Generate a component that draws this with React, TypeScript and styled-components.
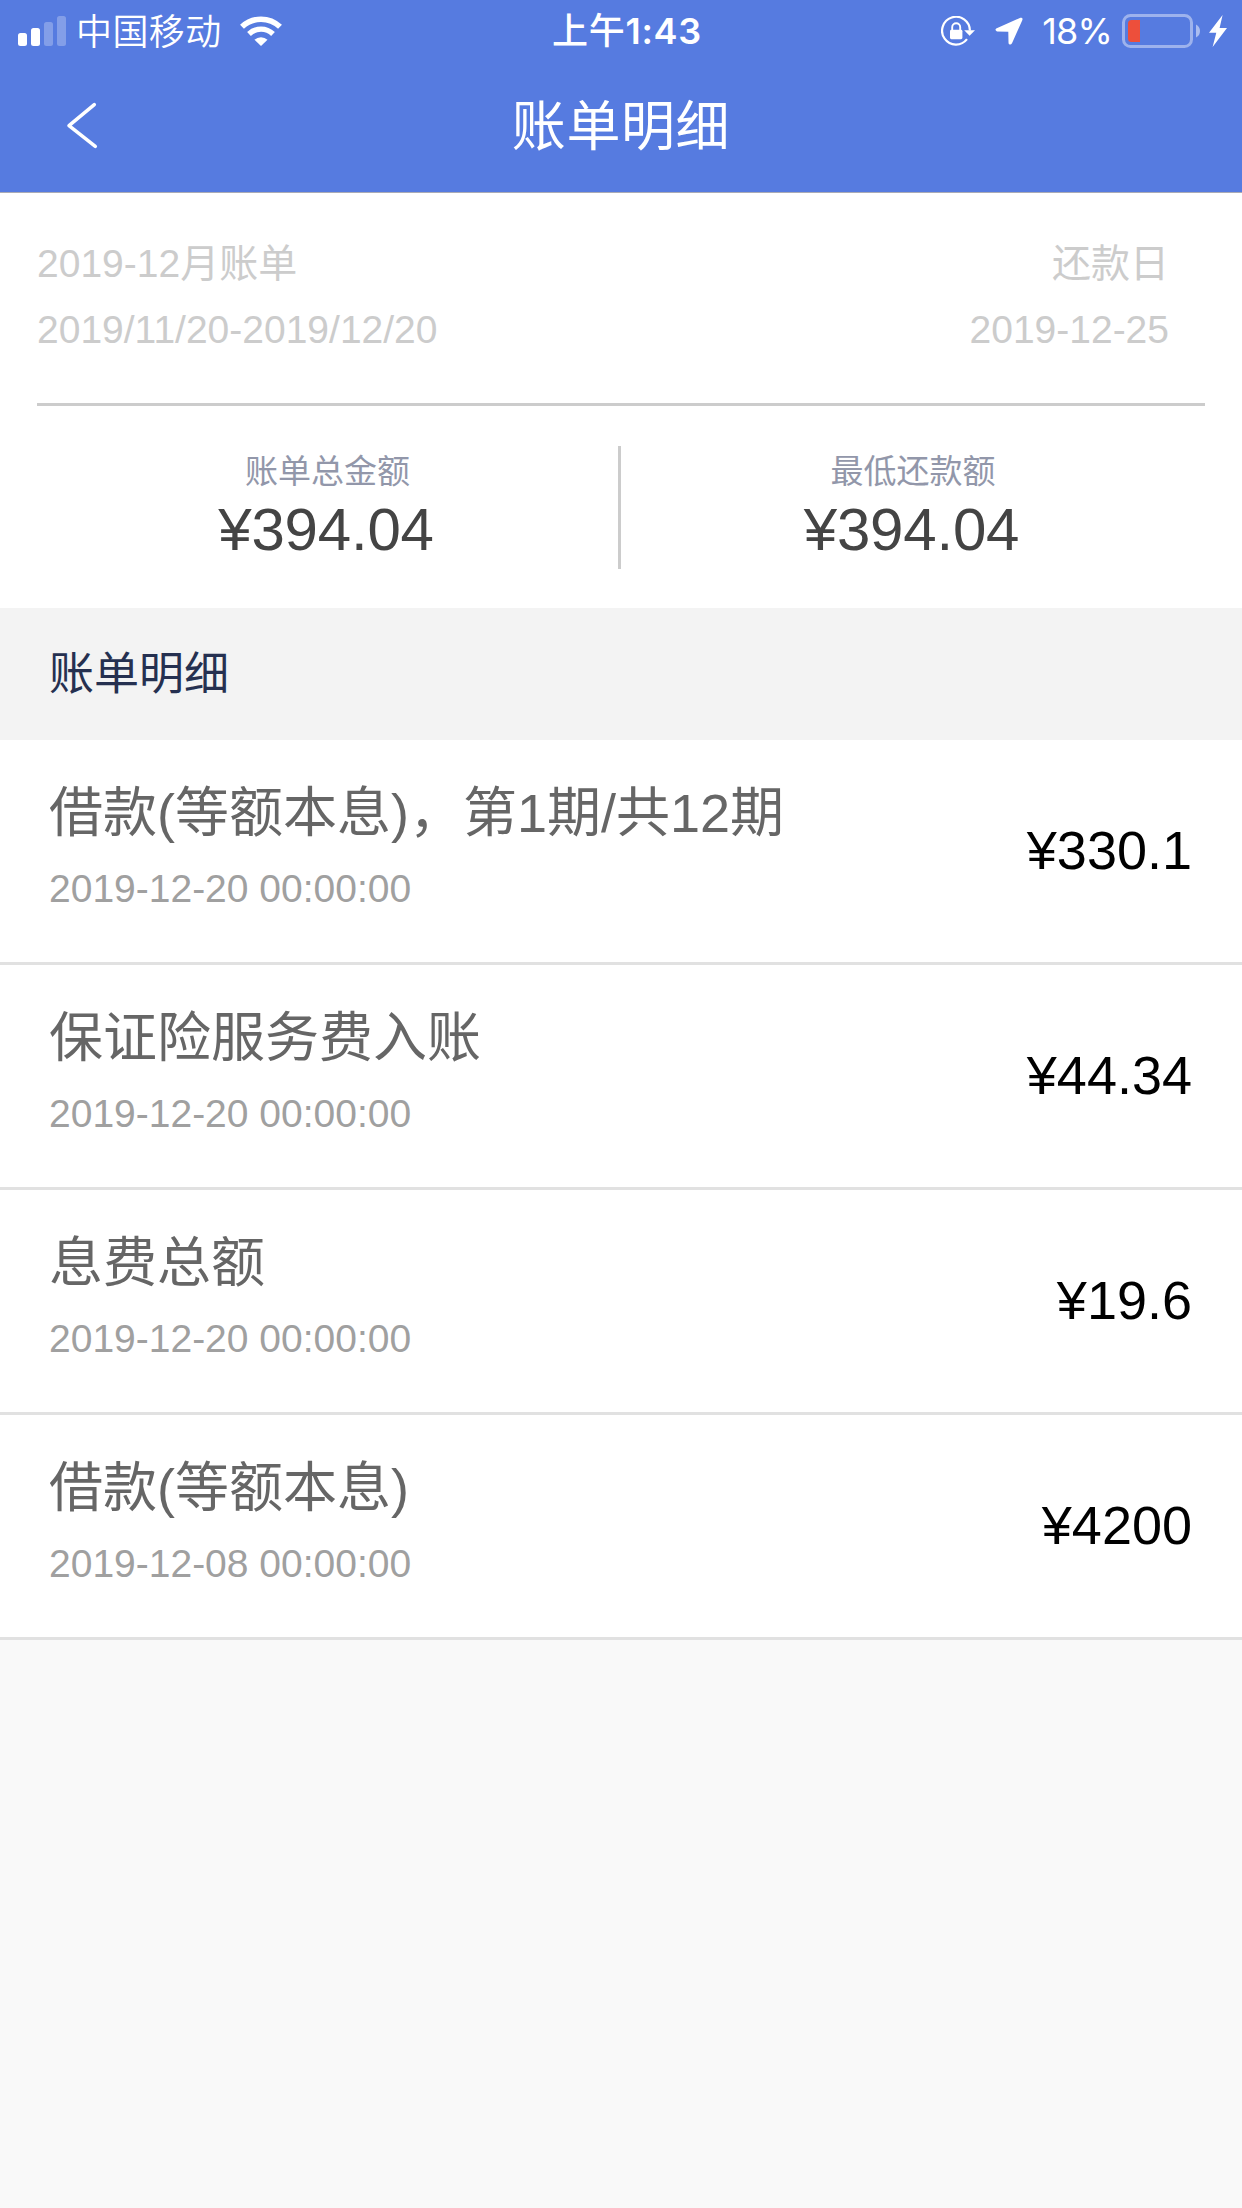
import React from "react";
import styled, { createGlobalStyle } from "styled-components";

const GlobalStyle = createGlobalStyle`
  * { box-sizing: border-box; }
  body {
    margin: 0;
    background: #f9f9f9;
    font-family: "Liberation Sans", "Noto Sans CJK SC", sans-serif;
  }
`;

const Page = styled.main`
  width: 1242px;
  min-height: 2208px;
  background: #f9f9f9;
  white-space: nowrap;
`;

const Header = styled.header`
  height: 193px;
  background: #567be0;
  border-bottom: 1px solid #aaabb5;
  color: #fff;
`;

const StatusBar = styled.div`
  display: grid;
  grid-template-columns: 1fr auto 1fr;
  height: 60px;
  padding: 0 15px 0 18px;
  font-family: Inter, "Noto Sans CJK SC", sans-serif;
  font-size: 36px;
  line-height: 60px;
`;

const StatusGroup = styled.div<{ $end?: boolean }>`
  display: flex;
  align-items: center;
  justify-content: ${(p) => (p.$end ? "flex-end" : "flex-start")};
`;

const Carrier = styled.span`
  margin: -4px 18px 0 10px;
  font-family: "Noto Sans CJK SC", sans-serif;
  font-weight: 350;
  letter-spacing: 0.4px;
`;

const Clock = styled.time`
  padding: 1px 0 0 9px;
  font-weight: 600;
  letter-spacing: 0.7px;
`;

const ClockPeriod = styled.span`
  font-weight: 500;
`;

const Percent = styled.span`
  margin: 0 10px 0 19px;
  letter-spacing: -0.8px;
`;

const NavBar = styled.nav`
  display: grid;
  grid-template-columns: 150px 1fr 150px;
  align-items: center;
  height: 132px;
`;

const BackButton = styled.button`
  display: flex;
  width: 36px;
  height: 50px;
  margin: 0 0 3px 64px;
  padding: 0;
  border: 0;
  background: none;
  color: inherit;
`;

const NavTitle = styled.h1`
  margin: 0;
  padding-top: 3px;
  font-size: 54px;
  font-weight: 400;
  letter-spacing: 0.6px;
  line-height: 129px;
  text-align: center;
`;

const Summary = styled.section`
  height: 415px;
  padding: 38px 37px 0;
  background: #fff;
`;

const Period = styled.div`
  display: flex;
  justify-content: space-between;
  height: 175px;
  padding-right: 36px;
  border-bottom: 3px solid #ccc;
  color: #ccc;
  font-size: 39px;
  line-height: 66px;
`;

const PeriodColumn = styled.div<{ $end?: boolean }>`
  text-align: ${(p) => (p.$end ? "right" : "left")};
`;

const Totals = styled.div`
  display: grid;
  grid-template-columns: 581px 3px 1fr;
  height: 123px;
  margin-top: 40px;
`;

const Divider = styled.div`
  background: #ccc;
`;

const Total = styled.div`
  padding-top: 1px;
  text-align: center;
`;

const TotalLabel = styled.div`
  height: 47px;
  color: #9297aa;
  font-size: 33px;
  line-height: 49px;
`;

const TotalAmount = styled.div`
  height: 72px;
  margin-right: 3px;
  color: #444;
  font-size: 60px;
  letter-spacing: -0.2px;
  line-height: 72px;
`;

const SectionTitle = styled.h2`
  height: 132px;
  margin: 0;
  padding: 2px 0 0 49px;
  background: #f3f3f3;
  color: #253050;
  font-size: 45px;
  font-weight: 400;
  line-height: 130px;
`;

const List = styled.ul`
  margin: 0;
  padding: 0;
  list-style: none;
`;

const Row = styled.li`
  display: flex;
  align-items: flex-start;
  justify-content: space-between;
  height: 225px;
  padding: 31px 50px 0 49px;
  border-bottom: 3px solid #e1e1e1;
  background: #fff;
`;

const RowTitle = styled.div`
  height: 85px;
  color: #666;
  font-size: 54px;
  line-height: 84px;
`;

const RowTime = styled.div`
  height: 66px;
  color: #a0a0a0;
  font-size: 39px;
  line-height: 66px;
`;

const RowAmount = styled.div`
  margin-top: 43px;
  color: #000;
  font-size: 54px;
  line-height: 72px;
`;

const SignalIcon = () => (
  <svg width="48" height="30" viewBox="0 0 48 30" fill="#fff">
    <rect x="0" y="17" width="9" height="13" rx="2.5" />
    <rect x="13" y="12" width="9" height="18" rx="2.5" />
    <rect x="26" y="6" width="9" height="24" rx="2.5" opacity=".27" />
    <rect x="39" y="0" width="9" height="30" rx="2.5" opacity=".27" />
  </svg>
);

const WifiIcon = () => (
  <svg width="42" height="30" viewBox="0 0 42 30" fill="none" stroke="#fff">
    <path d="M2 10.8A27.5 27.5 0 0 1 40 10.8" strokeWidth="5.6" />
    <path d="M9 18A17.3 17.3 0 0 1 33 18" strokeWidth="5.4" />
    <path d="M14.5 23.8A9.3 9.3 0 0 1 27.5 23.8L21 30Z" fill="#fff" stroke="none" />
  </svg>
);

const RotationLockIcon = () => (
  <svg width="34" height="30" viewBox="0 0 34 30" fill="none" stroke="#fff">
    <path d="M26 23.2A13.9 13.9 0 1 1 28.9 14.5" strokeWidth="2.2" />
    <path d="M23.2 14.2H34L28.6 19.8Z" fill="#fff" stroke="none" />
    <rect x="9" y="13.8" width="12.4" height="9.4" rx="1.4" fill="#fff" stroke="none" />
    <path d="M11.2 14V11.2a4 4 0 0 1 8 0V14" strokeWidth="1.9" />
  </svg>
);

const LocationIcon = () => (
  <svg width="28" height="28" viewBox="0 0 28 28" fill="#fff">
    <path d="M1.2 11.4 25.4.8Q28 .2 27.4 3L17 26.2Q15.8 28.2 14.2 27.2 13.5 26.8 13.5 25.4L13.3 14.7 2 14.4Q-.6 13.4 1.2 11.4Z" />
  </svg>
);

const BatteryIcon = () => (
  <svg width="78" height="34" viewBox="0 0 78 34">
    <rect x="1.5" y="1.5" width="68" height="31" rx="7" fill="none" stroke="#fff" strokeOpacity=".42" strokeWidth="3" />
    <path d="M74 10.5Q78 12.5 78 17T74 23.5Z" fill="#fff" fillOpacity=".5" />
    <path d="M18 6V28H9.5Q6 28 6 24.5V9.5Q6 6 9.5 6Z" fill="#ed4f3b" />
  </svg>
);

const BoltIcon = () => (
  <svg width="18" height="32" viewBox="0 0 18 32" fill="#fff">
    <path d="M13.6 0 0 17.8H7.3L3.6 32 18 13H10.6Z" />
  </svg>
);

const BackIcon = () => (
  <svg width="36" height="50" viewBox="0 0 36 50" fill="none" stroke="#fff" strokeWidth="3.5" strokeLinecap="round" strokeLinejoin="round">
    <path d="M30.3 4.6 5 25.6 31.3 46.4" />
  </svg>
);

const LockSlot = styled.span`
  display: flex;
  margin-right: 20px;
`;

const BoltSlot = styled.span`
  display: flex;
  margin-left: 9px;
`;

const totals = [
  { label: "账单总金额", amount: "¥394.04" },
  { label: "最低还款额", amount: "¥394.04" },
];

const entries = [
  { title: "借款(等额本息)，第1期/共12期", time: "2019-12-20 00:00:00", amount: "¥330.1" },
  { title: "保证险服务费入账", time: "2019-12-20 00:00:00", amount: "¥44.34" },
  { title: "息费总额", time: "2019-12-20 00:00:00", amount: "¥19.6" },
  { title: "借款(等额本息)", time: "2019-12-08 00:00:00", amount: "¥4200" },
];

export default function App() {
  return (
    <>
      <GlobalStyle />
      <Page lang="zh-CN">
        <Header>
          <StatusBar>
            <StatusGroup>
              <SignalIcon />
              <Carrier>中国移动</Carrier>
              <WifiIcon />
            </StatusGroup>
            <Clock>
              <ClockPeriod>上午</ClockPeriod>1:43
            </Clock>
            <StatusGroup $end>
              <LockSlot>
                <RotationLockIcon />
              </LockSlot>
              <LocationIcon />
              <Percent>18%</Percent>
              <BatteryIcon />
              <BoltSlot>
                <BoltIcon />
              </BoltSlot>
            </StatusGroup>
          </StatusBar>
          <NavBar>
            <BackButton aria-label="返回">
              <BackIcon />
            </BackButton>
            <NavTitle>账单明细</NavTitle>
          </NavBar>
        </Header>
        <Summary>
          <Period>
            <PeriodColumn>
              <div>2019-12月账单</div>
              <div>2019/11/20-2019/12/20</div>
            </PeriodColumn>
            <PeriodColumn $end>
              <div>还款日</div>
              <div>2019-12-25</div>
            </PeriodColumn>
          </Period>
          <Totals>
            {totals.map((t, i) => (
              <React.Fragment key={t.label}>
                {i > 0 && <Divider />}
                <Total>
                  <TotalLabel>{t.label}</TotalLabel>
                  <TotalAmount>{t.amount}</TotalAmount>
                </Total>
              </React.Fragment>
            ))}
          </Totals>
        </Summary>
        <SectionTitle>账单明细</SectionTitle>
        <List>
          {entries.map((e) => (
            <Row key={e.title}>
              <div>
                <RowTitle>{e.title}</RowTitle>
                <RowTime>{e.time}</RowTime>
              </div>
              <RowAmount>{e.amount}</RowAmount>
            </Row>
          ))}
        </List>
      </Page>
    </>
  );
}
